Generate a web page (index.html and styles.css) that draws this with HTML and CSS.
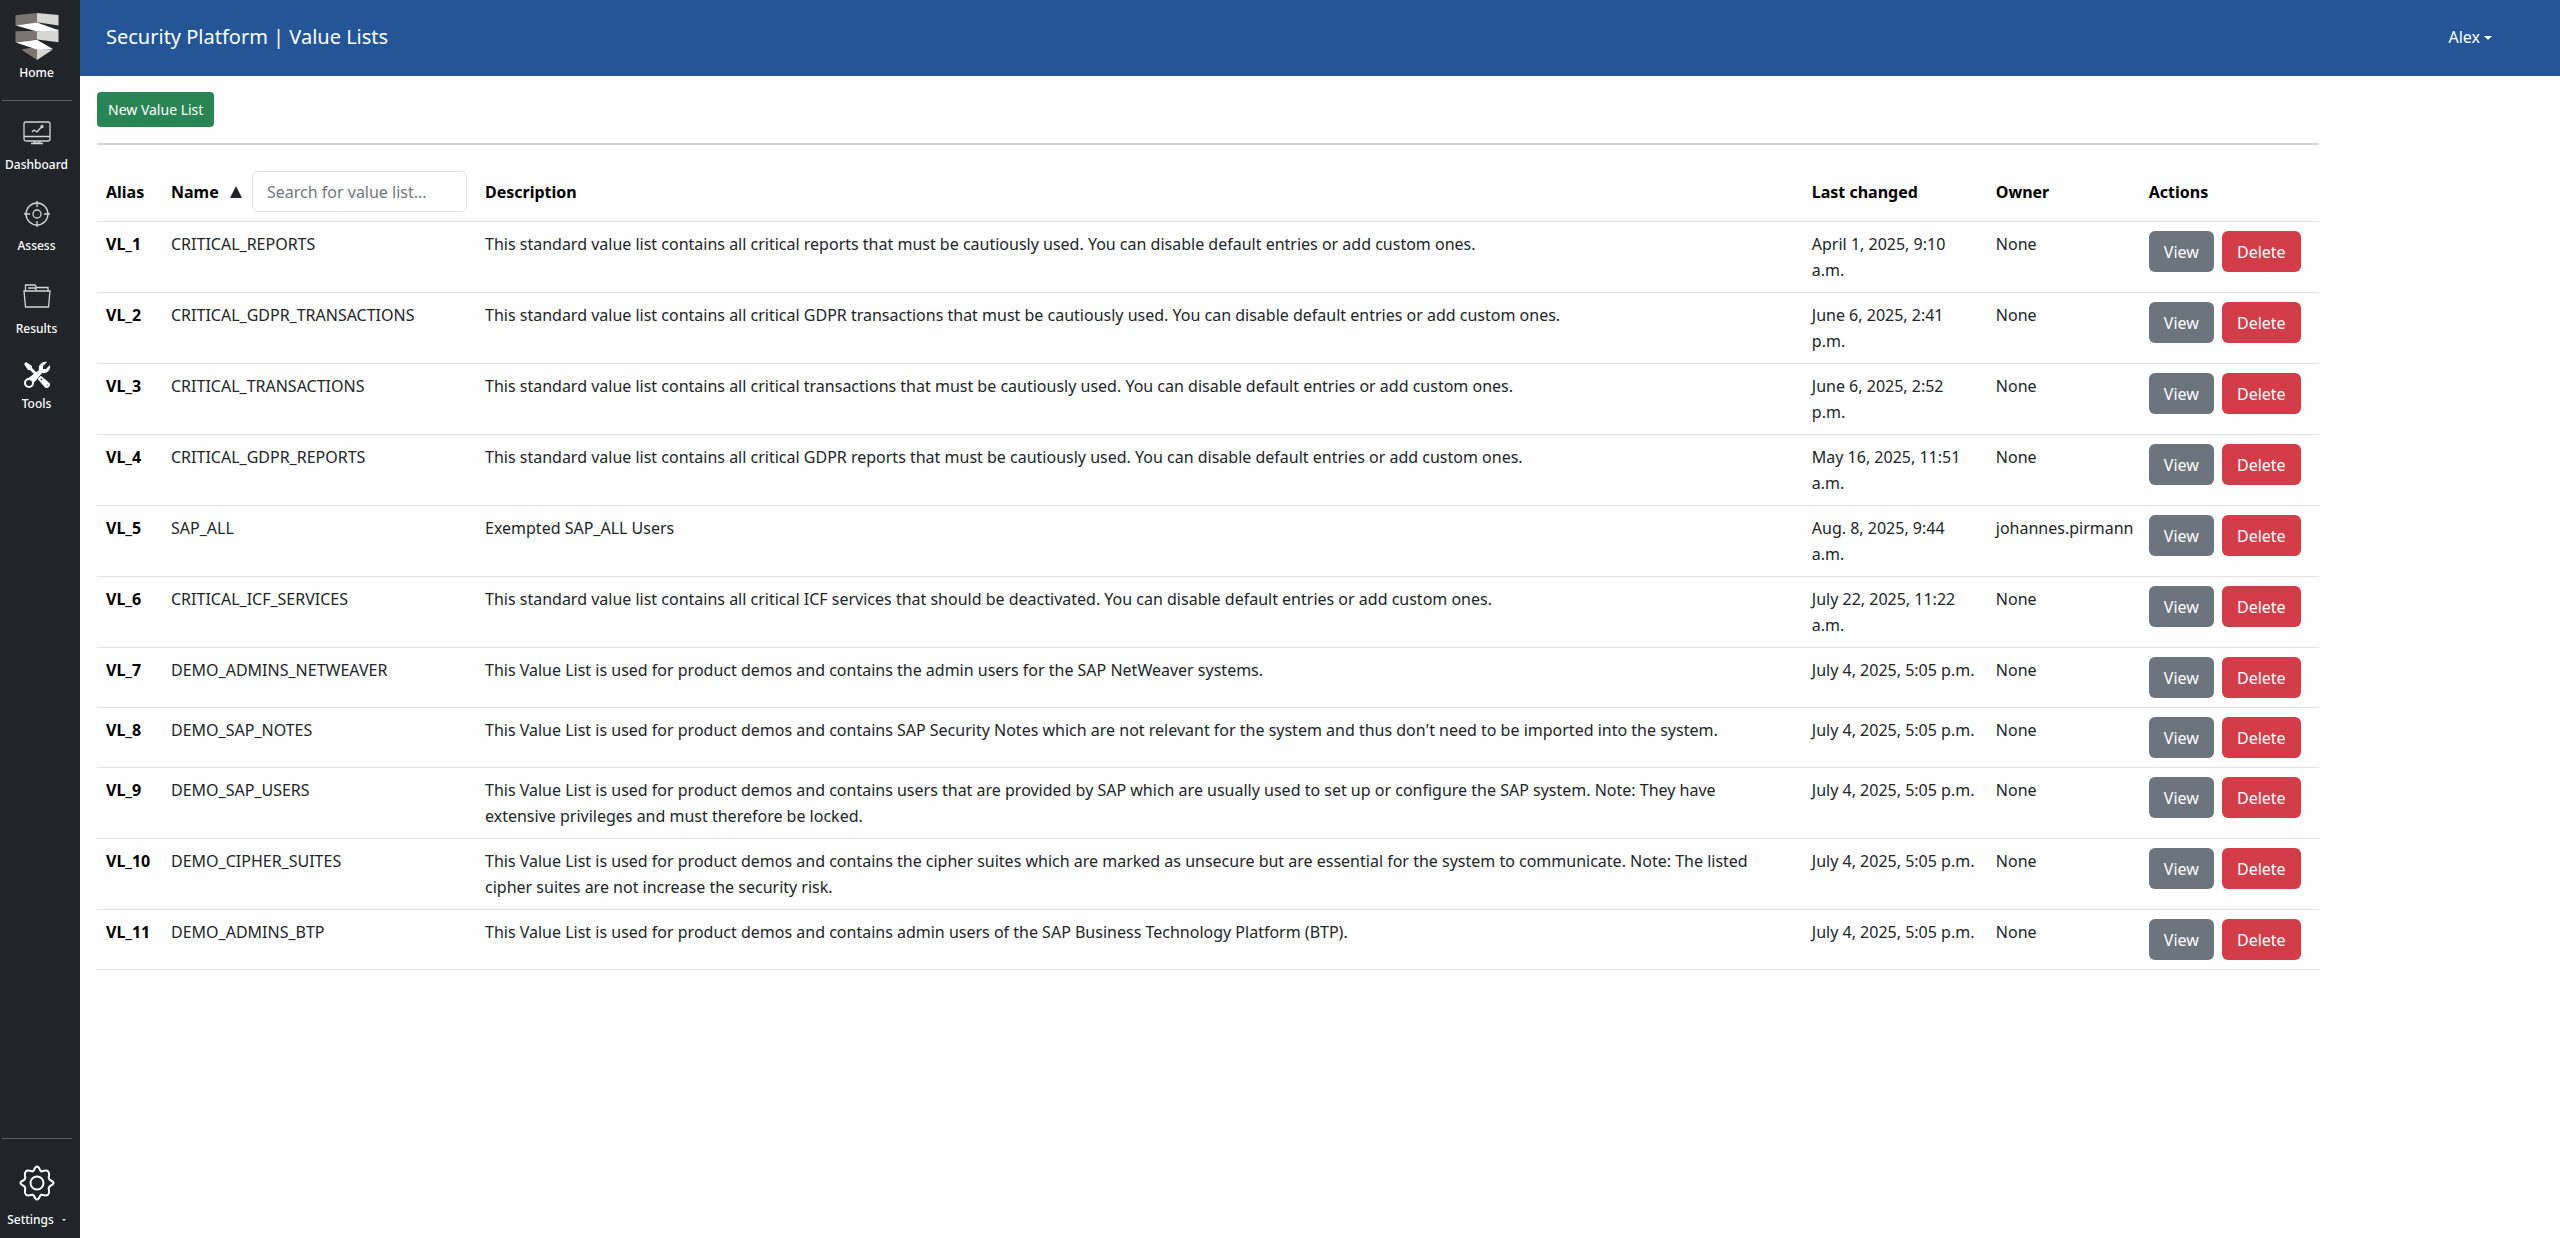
FILE: index.html
```
<!DOCTYPE html>
<html lang="en">

<head>
  <meta charset="UTF-8">
  <meta name="viewport" content="width=device-width, initial-scale=1.0">
  <title>Security Platform | Value Lists</title>
  <link rel="stylesheet" href="styles.css">
</head>

<body>
  <nav class="sidebar">
    <a class="nav-item home" href="#">
      <svg class="logo" viewBox="44 38 132 142">
        <path fill="#7d7471" d="M45 45L110 38V68L45 76ZM45 93L110 92V118L45 126ZM62 148L110 140V180Z" />
        <path fill="#d6d6d4" d="M110 38L175 44V76L110 66ZM110 94L175 88V126L110 118ZM110 146L158 148L110 180Z" />
        <path fill="#fff" d="M46 76L110 67L175 90L110 94ZM46 127L110 119L158 147L110 148Z" />
      </svg>
      <span>Home</span>
    </a>
    <hr>
    <a class="nav-item dashboard" href="#">
      <svg class="icon" viewBox="0 0 28 28">
        <rect x="1" y="3" width="26" height="19" rx="2" />
        <path d="M1 17.500H27M9 13L11 11L14 13L18 8.500M11 22V24H17V22M8 24.500H20" />
        <circle cx="19" cy="7.500" r="1" />
      </svg>
      <span>Dashboard</span>
    </a>
    <a class="nav-item assess" href="#">
      <svg class="icon" viewBox="0 0 28 28">
        <circle cx="14" cy="14" r="11" />
        <circle cx="14" cy="14" r="4" />
        <path d="M14 1V7M14 21V27M1 14H7M21 14H27" />
      </svg>
      <span>Assess</span>
    </a>
    <a class="nav-item results" href="#">
      <svg class="icon" viewBox="0 0 28 28">
        <path d="M1 8H27L25.500 24H2.500ZM2.500 8V2H12L13.500 4.500H25V8M5 5H12L13.500 7" />
      </svg>
      <span>Results</span>
    </a>
    <a class="nav-item tools" href="#">
      <svg class="icon" viewBox="0 0 28 28">
        <path class="solid" d="M1 3L3 1L9 5V7L16 14L14 16L7 9H5Z" />
        <path class="solid" d="M4 18L16 9C15 4 19 0 24 1L20 5V8H23L27 4C28 9 24 13 19 12L10 23Z" />
        <circle class="ring" cx="6" cy="22" r="4" fill="#212529" />
        <path class="ring" d="M16 18L18 16L26 23Q26 26 23 26ZM19 19L24 24" />
      </svg>
      <span>Tools</span>
    </a>
    <div class="bottom">
      <hr>
      <a class="nav-item settings" href="#">
        <svg class="gear" viewBox="0 0 36 36">
          <circle cx="18" cy="18" r="6.500" />
          <path d="M15 5Q18 -2 21 5Q22 7 24 6Q31 4 30 11Q29 13 31 15Q38 18 31 21Q29 23 30 25Q31 32 24 30Q22 29 21 31Q18 38 15 31Q14 29 12 30Q5 32 6 25Q7 23 5 21Q-2 18 5 15Q7 13 6 11Q5 4 12 6Q14 7 15 5Z" />
        </svg>
        <span class="caret">Settings</span>
      </a>
    </div>
  </nav>

  <div class="page">
    <header class="topbar">
      <h1>Security Platform | Value Lists</h1>
      <a class="user caret" href="#">Alex</a>
    </header>

    <main class="content">
      <button class="btn btn-new" type="button">New Value List</button>
      <hr>
      <table class="value-lists">
        <colgroup>
          <col class="col-alias">
          <col class="col-name">
          <col>
          <col class="col-changed">
          <col class="col-owner">
          <col class="col-actions">
        </colgroup>
        <thead>
          <tr>
            <th>Alias</th>
            <th>
              <div class="name-head">
                <label for="search">Name</label>
                <svg class="sort" viewBox="0 0 12 12"><path d="M6 0L12 12H0Z" /></svg>
                <input id="search" type="text" placeholder="Search for value list...">
              </div>
            </th>
            <th>Description</th>
            <th>Last changed</th>
            <th>Owner</th>
            <th>Actions</th>
          </tr>
        </thead>
        <tbody>
          <tr>
            <th>VL_1</th>
            <td>CRITICAL_REPORTS</td>
            <td class="desc">This standard value list contains all critical reports that must be cautiously used. You can disable default entries or add custom ones.</td>
            <td>April 1, 2025, 9:10 a.m.</td>
            <td>None</td>
            <td><div class="actions"><button class="btn btn-view">View</button><button class="btn btn-delete">Delete</button></div></td>
          </tr>
          <tr>
            <th>VL_2</th>
            <td>CRITICAL_GDPR_TRANSACTIONS</td>
            <td class="desc">This standard value list contains all critical GDPR transactions that must be cautiously used. You can disable default entries or add custom ones.</td>
            <td>June 6, 2025, 2:41 p.m.</td>
            <td>None</td>
            <td><div class="actions"><button class="btn btn-view">View</button><button class="btn btn-delete">Delete</button></div></td>
          </tr>
          <tr>
            <th>VL_3</th>
            <td>CRITICAL_TRANSACTIONS</td>
            <td class="desc">This standard value list contains all critical transactions that must be cautiously used. You can disable default entries or add custom ones.</td>
            <td>June 6, 2025, 2:52 p.m.</td>
            <td>None</td>
            <td><div class="actions"><button class="btn btn-view">View</button><button class="btn btn-delete">Delete</button></div></td>
          </tr>
          <tr>
            <th>VL_4</th>
            <td>CRITICAL_GDPR_REPORTS</td>
            <td class="desc">This standard value list contains all critical GDPR reports that must be cautiously used. You can disable default entries or add custom ones.</td>
            <td>May 16, 2025, 11:51 a.m.</td>
            <td>None</td>
            <td><div class="actions"><button class="btn btn-view">View</button><button class="btn btn-delete">Delete</button></div></td>
          </tr>
          <tr>
            <th>VL_5</th>
            <td>SAP_ALL</td>
            <td class="desc">Exempted SAP_ALL Users</td>
            <td>Aug. 8, 2025, 9:44 a.m.</td>
            <td>johannes.pirmann</td>
            <td><div class="actions"><button class="btn btn-view">View</button><button class="btn btn-delete">Delete</button></div></td>
          </tr>
          <tr>
            <th>VL_6</th>
            <td>CRITICAL_ICF_SERVICES</td>
            <td class="desc">This standard value list contains all critical ICF services that should be deactivated. You can disable default entries or add custom ones.</td>
            <td>July 22, 2025, 11:22 a.m.</td>
            <td>None</td>
            <td><div class="actions"><button class="btn btn-view">View</button><button class="btn btn-delete">Delete</button></div></td>
          </tr>
          <tr>
            <th>VL_7</th>
            <td>DEMO_ADMINS_NETWEAVER</td>
            <td class="desc">This Value List is used for product demos and contains the admin users for the SAP NetWeaver systems.</td>
            <td>July 4, 2025, 5:05 p.m.</td>
            <td>None</td>
            <td><div class="actions"><button class="btn btn-view">View</button><button class="btn btn-delete">Delete</button></div></td>
          </tr>
          <tr>
            <th>VL_8</th>
            <td>DEMO_SAP_NOTES</td>
            <td class="desc">This Value List is used for product demos and contains SAP Security Notes which are not relevant for the system and thus don't need to be imported into the system.</td>
            <td>July 4, 2025, 5:05 p.m.</td>
            <td>None</td>
            <td><div class="actions"><button class="btn btn-view">View</button><button class="btn btn-delete">Delete</button></div></td>
          </tr>
          <tr>
            <th>VL_9</th>
            <td>DEMO_SAP_USERS</td>
            <td class="desc">This Value List is used for product demos and contains users that are provided by SAP which are usually used to set up or configure the SAP system. Note: They have extensive privileges and must therefore be locked.</td>
            <td>July 4, 2025, 5:05 p.m.</td>
            <td>None</td>
            <td><div class="actions"><button class="btn btn-view">View</button><button class="btn btn-delete">Delete</button></div></td>
          </tr>
          <tr>
            <th>VL_10</th>
            <td>DEMO_CIPHER_SUITES</td>
            <td class="desc">This Value List is used for product demos and contains the cipher suites which are marked as unsecure but are essential for the system to communicate. Note: The listed cipher suites are not increase the security risk.</td>
            <td>July 4, 2025, 5:05 p.m.</td>
            <td>None</td>
            <td><div class="actions"><button class="btn btn-view">View</button><button class="btn btn-delete">Delete</button></div></td>
          </tr>
          <tr>
            <th>VL_11</th>
            <td>DEMO_ADMINS_BTP</td>
            <td class="desc">This Value List is used for product demos and contains admin users of the SAP Business Technology Platform (BTP).</td>
            <td>July 4, 2025, 5:05 p.m.</td>
            <td>None</td>
            <td><div class="actions"><button class="btn btn-view">View</button><button class="btn btn-delete">Delete</button></div></td>
          </tr>
        </tbody>
      </table>
    </main>
  </div>
</body>

</html>
```
FILE: styles.css
```
* {
  margin: 0;
  padding: 0;
  box-sizing: border-box;
}

body {
  display: flex;
  min-height: 100vh;
  font-family: "Noto Sans", sans-serif;
  font-size: 16px;
  line-height: 26px;
  color: #212529;
  background: #fefefe;
}

a {
  color: #fff;
  text-decoration: none;
}

/* sidebar */
.sidebar {
  width: 80px;
  flex-shrink: 0;
  display: flex;
  flex-direction: column;
  padding-right: 7px;
  background: #212529;
}

.sidebar hr {
  margin: 0 1px 0 2px;
  border: 0;
  border-top: 1px solid #5c6165;
}

.nav-item {
  display: flex;
  flex-direction: column;
  align-items: center;
  font-size: 12px;
  font-weight: 500;
  line-height: 18px;
}

.home {
  gap: 4px;
  padding: 13px 0 18px;
}

.logo {
  width: 44px;
  height: 47px;
}

.icon {
  width: 28px;
  height: 28px;
  fill: none;
  stroke: #d3d4d5;
  stroke-width: 1.3;
}

.icon .solid {
  fill: #fff;
  stroke: none;
}

.icon .ring {
  stroke: #fff;
  stroke-width: 2;
}

.dashboard {
  gap: 9px;
  padding-top: 18px;
}

.assess {
  gap: 9px;
  padding-top: 26px;
}

.results {
  gap: 9px;
  padding-top: 28px;
}

.tools {
  gap: 6px;
  padding-top: 23px;
}

.bottom {
  margin-top: auto;
}

.settings {
  gap: 10px;
  padding: 26px 0 9px;
}

.gear {
  width: 36px;
  height: 36px;
  fill: none;
  stroke: #fff;
  stroke-width: 2;
}

.caret::after {
  content: '';
  display: inline-block;
  margin-left: 4px;
  vertical-align: 3px;
  border-top: 4px solid;
  border-left: 4px solid transparent;
  border-right: 4px solid transparent;
}

.settings .caret::after {
  margin-left: 8px;
  border-width: 2px 2px 0;
}

/* main area */
.page {
  flex: 1;
  min-width: 0;
}

.topbar {
  display: flex;
  align-items: center;
  justify-content: space-between;
  height: 76px;
  padding: 0 68px 2px 26px;
  background: #235597;
}

.topbar h1 {
  font-size: 20px;
  font-weight: 400;
  color: #fff;
}

.content {
  width: 91%;
  padding: 16px 18px 16px 17px;
}

.content > hr {
  margin: 16px 0 17px;
  border: 0;
  border-top: 2px solid #d0d1d2;
}

.btn {
  border: 0;
  border-radius: 6px;
  font: inherit;
  color: #fff;
  cursor: pointer;
}

.btn-new {
  display: block;
  height: 35px;
  padding: 0 11px;
  border-radius: 4px;
  font-size: 14px;
  background: #2a8555;
}

.value-lists {
  width: 100%;
  table-layout: fixed;
  border-collapse: collapse;
}

.col-alias {
  width: 65px;
}

.col-name {
  width: 314px;
}

.col-changed {
  width: 184px;
}

.col-owner {
  width: 153px;
}

.col-actions {
  width: 179px;
}

th,
td {
  padding: 9px;
  border-bottom: 1px solid #dee2e6;
  text-align: left;
  vertical-align: top;
}

td.desc {
  padding-right: 36px;
}

th {
  color: #000;
  font-weight: 700;
  white-space: nowrap;
}

thead th {
  vertical-align: middle;
}

.name-head {
  display: flex;
  align-items: center;
}

.sort {
  width: 12px;
  height: 12px;
  margin: 0 10px 0 auto;
  fill: #212529;
}

.name-head input {
  width: 215px;
  height: 41px;
  padding: 0 14px;
  border: 1px solid #dee2e6;
  border-radius: 6px;
  font: inherit;
  font-weight: 400;
  color: #212529;
  background: #fff;
}

.name-head input::placeholder {
  color: #72777b;
}

.actions {
  display: flex;
  gap: 8px;
}

.actions .btn {
  height: 41px;
}

.btn-view {
  width: 65px;
  background: #6c757d;
}

.btn-delete {
  width: 79px;
  background: #d23d49;
}
```
